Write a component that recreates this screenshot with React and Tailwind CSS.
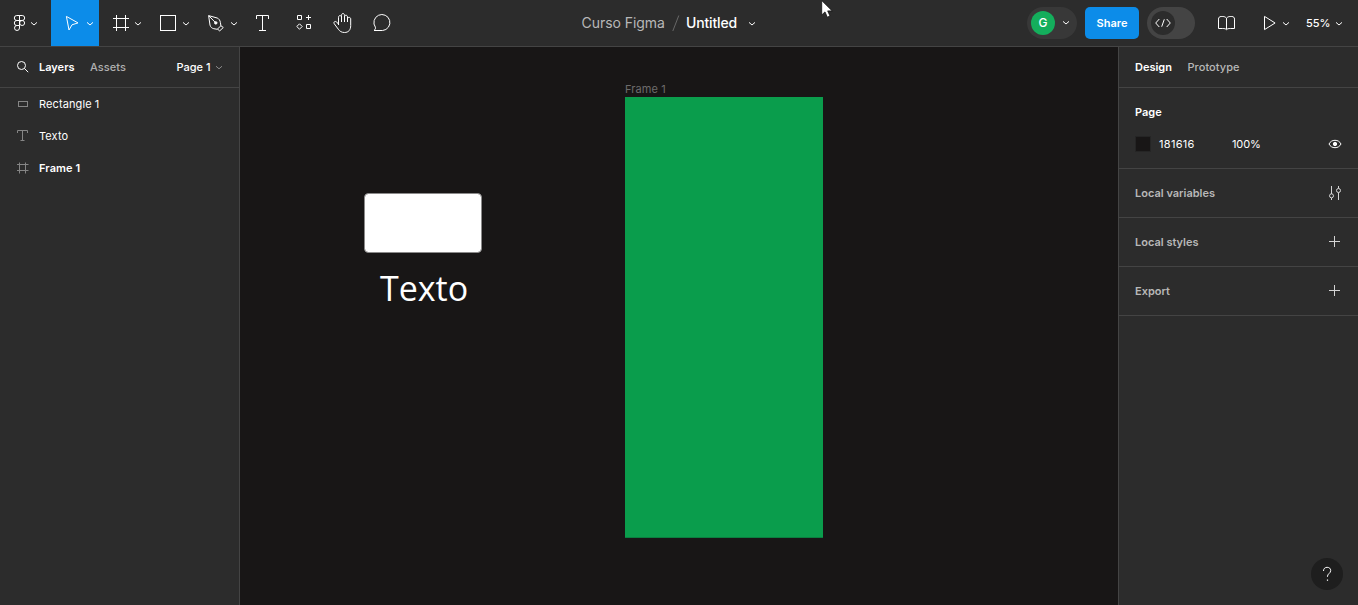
import React from "react";

function Art({ box, className = "", children, ...rest }) {
  const [, , w, h] = box.split(" ");
  return (
    <svg
      viewBox={box}
      width={w}
      height={h}
      fill="none"
      stroke="currentColor"
      className={`block shrink-0 ${className}`}
      aria-hidden="true"
      {...rest}
    >
      {children}
    </svg>
  );
}

const Chev = ({ x }) => <path d={`M${x - 3} 22.4l3 2.6 3-2.6`} strokeWidth="1" />;

function Toolbar() {
  return (
    <div className="flex h-full w-[420px] text-white">
      <button className="w-[51px]" aria-label="Menu">
        <Art box="0 0 51 46">
          <path d="M19.5 15.5h-2.7a2.5 2.5 0 0 0 0 5h2.7zM19.5 15.5h2.7a2.5 2.5 0 0 1 0 5h-2.7zM19.5 20.5h-2.7a2.5 2.5 0 0 0 0 5h2.7zM19.5 25.5h-2.7a2.5 2.5 0 1 0 2.7 2.5z" />
          <circle cx="22.1" cy="23" r="2.5" />
          <Chev x={34} />
        </Art>
      </button>
      <button className="w-12 bg-[#0c8ce9]" aria-label="Move">
        <Art box="51 0 48 46">
          <path d="M66.4 16.4L78 22.9l-6 1.9-3 5.2z" strokeLinejoin="round" />
          <Chev x={90} />
        </Art>
      </button>
      <button className="w-12" aria-label="Frame">
        <Art box="99 0 48 46">
          <path d="M116.5 15v16M125.5 15v16M113 18.5h16M113 27.5h16" />
          <Chev x={138} />
        </Art>
      </button>
      <button className="w-12" aria-label="Rectangle">
        <Art box="147 0 48 46">
          <rect x="160.5" y="15.5" width="15" height="15" />
          <Chev x={186} />
        </Art>
      </button>
      <button className="w-12" aria-label="Pen">
        <Art box="195 0 48 46">
          <path d="M208.6 15.6l8.6 2.4c1.8.7 2.9 2.4 3.2 4.6l.5 3.2-3.7 3.5-3.4-.6c-1.9-.4-3.3-1.6-3.8-3.6zM208.8 15.8l6.2 6.3M220.7 25.6l2.6 1.9-3.6 3.4-2.3-1.9" strokeLinejoin="round" />
          <circle cx="215.8" cy="22.9" r="1.2" fill="currentColor" />
          <Chev x={234} />
        </Art>
      </button>
      <button className="w-10" aria-label="Text">
        <Art box="243 0 40 46">
          <path d="M256.5 19v-3.500h12V19M262.500 15.500v15M259 30.500h7" />
        </Art>
      </button>
      <button className="w-10" aria-label="Resources">
        <Art box="283 0 40 46">
          <path d="M297.500 15.500h4v4h-4zM306.500 24.500h4v4h-4zM308.500 15v5M306 17.500h5M299.500 23.800l2.700 2.700-2.700 2.700-2.700-2.700z" />
        </Art>
      </button>
      <button className="w-10" aria-label="Hand">
        <Art box="323 0 40 46">
          <path d="M338.500 25v-7.700c0-2.300 3-2.300 3 0V22M341.500 22v-6.700c0-2.400 3-2.400 3 0V22M344.500 17c0-2.300 3-2.300 3 0v5M347.500 19c0-2.200 3.200-2.200 3.200 0v6.500c0 4.500-2.200 7-6.200 7-3 0-4.700-1.200-6.200-3.300l-4.100-5.500c-1-1.600.8-2.900 2.300-1.900l2 2.400" strokeLinejoin="round" />
        </Art>
      </button>
      <button className="w-10" aria-label="Comment">
        <Art box="363 0 40 46">
          <path d="M374 30.500c1.300-1 1.700-2 1.400-3.300a8 8 0 1 1 7.200 3.300z" strokeLinejoin="round" />
        </Art>
      </button>
    </div>
  );
}

function TopBar() {
  return (
    <header className="flex h-[47px] shrink-0 border-b border-[#444] bg-[#2c2c2c] text-white">
      <Toolbar />
      <div className="flex flex-1 items-center pl-[161.5px] text-[14px] leading-[46px]">
        <span className="w-[90px] tracking-[-0.05px] text-[#b8b8b8]">Curso Figma</span>
        <Art box="0 0 8 46" className="text-[#686868]">
          <path d="M6.800 15.500L.8 31" />
        </Art>
        <span className="ml-[6.500px] w-[60px] font-medium tracking-[-0.150px]">Untitled</span>
        <Art box="746 0 12 46"><Chev x={752} /></Art>
      </div>
      <div className="flex items-center">
        <div className="flex h-8 w-[50px] items-center rounded-full bg-[#383838] pl-1">
          <span className="flex size-6 items-center justify-center rounded-full bg-[#14ae5c] text-[12px] font-medium">G</span>
          <Art box="1055 8 18 32"><Chev x={1066} /></Art>
        </div>
        <button className="ml-2 h-8 w-[54px] rounded-[5px] bg-[#0c8ce9] text-[11px] font-semibold">Share</button>
        <div className="ml-2 flex h-8 w-12 items-center rounded-full bg-[#444] pl-1">
          <span className="size-6 rounded-full bg-[#2c2c2c]">
            <Art box="0 0 24 24">
              <path d="M8.300 8L4.700 12l3.600 4M15.700 8l3.600 4-3.600 4M13.300 8.300l-2.600 7.400" />
            </Art>
          </span>
        </div>
        <Art box="1195 0 111 46">
          <path d="M1226.500 18.200c-1-1.200-2.200-1.700-3.700-1.700h-1.600c-1.700 0-2.700 1-2.700 2.600v9.400h4.200c1.700 0 3 .2 3.800 1.200.8-1 2.100-1.200 3.800-1.200h4.200v-9.400c0-1.600-1-2.600-2.700-2.600h-1.600c-1.500 0-2.700.5-3.700 1.700zm0 0v11" />
          <path d="M1264.500 16.400l10.600 6.600-10.600 6.600z" strokeLinejoin="round" />
          <Chev x={1286} />
        </Art>
        <span className="w-[26px] text-[11px] font-medium">55%</span>
        <Art box="1332 0 26 46"><Chev x={1339} /></Art>
      </div>
    </header>
  );
}

function Layer({ name, bold, children }) {
  return (
    <li className="flex h-8 items-center pl-4">
      <Art box="0 0 14 14" className="text-[#858585]">{children}</Art>
      <span className={`ml-[9px] tracking-[0.100px] text-white ${bold ? "font-semibold" : ""}`}>{name}</span>
    </li>
  );
}

function LayersPanel() {
  return (
    <aside className="w-60 shrink-0 border-r border-[#444] bg-[#2c2c2c]">
      <div className="flex h-[41px] items-center border-b border-[#444] pl-4">
        <Art box="16 60 14 14" className="text-white">
          <circle cx="21.500" cy="65.500" r="4" />
          <path d="M24.500 68.500l3.700 3.700" />
        </Art>
        <span className="ml-[9px] w-[51px] font-semibold text-white">Layers</span>
        <span className="w-[86.500px] font-medium tracking-[0.050px] text-[#b0b0b0]">Assets</span>
        <span className="w-[37.500px] font-medium text-white">Page 1</span>
        <Art box="214 60 10 14" className="text-[#8a8a8a]">
          <path d="M216 66.200l3 2.600 3-2.600" />
        </Art>
      </div>
      <ul>
        <Layer name="Rectangle 1"><rect x="2.500" y="4.500" width="9" height="5" /></Layer>
        <Layer name="Texto"><path d="M1.500 4V1.500h10V4M6.500 1.500v10M4.500 11.500h4" /></Layer>
        <Layer name="Frame 1" bold><path d="M3.500 1.500v11M9.500 1.500v11M1 3.500h11.500M1 9.500h11.500" /></Layer>
      </ul>
    </aside>
  );
}

const Plus = () => <path d="M6.500 1v11M1 6.500h11" />;

function Section({ title, children }) {
  return (
    <section className="flex h-[49px] items-center justify-between border-b border-[#444] pr-4 pl-4 text-[#b8b8b8]">
      <h2 className="font-semibold">{title}</h2>
      <Art box="0 0 14 14" className="text-[#d4d4d4]">{children}</Art>
    </section>
  );
}

function DesignPanel() {
  return (
    <aside className="flex w-60 shrink-0 flex-col border-l border-[#444] bg-[#2c2c2c]">
      <div className="flex h-[41px] shrink-0 items-center border-b border-[#444] pl-4">
        <span className="w-[52.500px] font-semibold text-white">Design</span>
        <span className="font-medium tracking-[0.050px] text-[#b8b8b8]">Prototype</span>
      </div>
      <section className="h-[81px] shrink-0 border-b border-[#444] px-4 pt-2 text-white">
        <h2 className="h-8 leading-8 font-semibold">Page</h2>
        <div className="flex h-8 items-center">
          <span className="size-4 border border-[#252525] bg-[#181616]" />
          <span className="ml-2 w-[73px] tracking-[0.300px]">181616</span>
          <span className="flex-1 tracking-[-0.100px]">100%</span>
          <Art box="0 0 14 14">
            <path d="M1 7c1.300-2.500 3.300-3.700 6-3.700S11.700 4.500 13 7c-1.300 2.500-3.300 3.700-6 3.700S2.300 9.500 1 7z" />
            <circle cx="7" cy="7" r="1.700" fill="currentColor" />
          </Art>
        </div>
      </section>
      <Section title="Local variables">
        <path d="M3.500 0v8M3.500 12v2M10.500 0v2.500M10.500 6.500V14" />
        <circle cx="3.500" cy="9.800" r="2" />
        <circle cx="10.500" cy="4.500" r="2" />
      </Section>
      <Section title="Local styles"><Plus /></Section>
      <Section title="Export"><Plus /></Section>
      <button className="mt-auto mr-[15px] mb-[15px] size-8 self-end rounded-full bg-[#1e1e1e] text-white" aria-label="Help">
        <Art box="0 0 32 32">
          <path d="M12.500 13c0-2.300 1.500-3.700 3.600-3.700 2.200 0 3.600 1.300 3.600 3.200 0 3-3.300 3-3.300 6.300" />
          <path d="M16.500 21.500v1.300" strokeWidth="1.200" />
        </Art>
      </button>
    </aside>
  );
}

function Canvas() {
  return (
    <main className="relative flex-1 overflow-hidden bg-[#181616]">
      <div className="absolute top-[146px] left-[124px] h-[59.500px] w-[118px] rounded-[4.500px] border border-[#8b8a8a] bg-white bg-clip-border" />
      <div className="absolute top-[217px] left-[140px] font-['Open_Sans',sans-serif] text-[34px] leading-[48px] text-white">Texto</div>
      <div className="absolute top-[34px] left-[385px] leading-4 tracking-[0.100px] text-[#6d6c6c]">Frame 1</div>
      <div className="absolute top-[50px] left-[385px] h-[441px] w-[198px] border-b border-[#0b7f40] bg-[#0a9d4c]" />
    </main>
  );
}

export default function App() {
  return (
    <div className="relative flex h-[605px] w-[1358px] flex-col overflow-hidden font-[Inter,sans-serif] text-[11px] leading-4">
      <TopBar />
      <div className="flex min-h-0 flex-1">
        <LayersPanel />
        <Canvas />
        <DesignPanel />
      </div>
      <svg className="absolute top-0 left-[821px]" width="13" height="19" aria-hidden="true">
        <path d="M.7.500v14.500l3.300-3.100 2.300 5.300 2.700-1.200-2.300-5.100h4.500z" fill="white" stroke="#111" strokeWidth=".8" />
      </svg>
    </div>
  );
}
